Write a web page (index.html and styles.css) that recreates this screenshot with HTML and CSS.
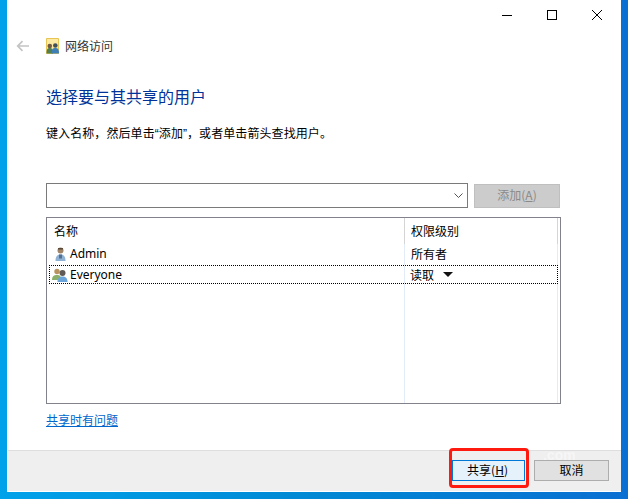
FILE: index.html
```html
<!DOCTYPE html>
<html lang="zh-CN">
<head>
<meta charset="utf-8">
<title>网络访问</title>
<link rel="stylesheet" href="styles.css">
</head>
<body>
<div class="window">
  <div class="titlebar">
    <svg class="cap" width="12" height="12" viewBox="0 0 12 12"><path d="M1 6.500h10" stroke="#000" fill="none"/></svg>
    <svg class="cap" width="12" height="12" viewBox="0 0 12 12"><rect x="1.500" y="1.500" width="9" height="9" stroke="#000" fill="none"/></svg>
    <svg class="cap" width="12" height="12" viewBox="0 0 12 12"><path d="M1 1l10 10M11 1L1 11" stroke="#000" fill="none"/></svg>
  </div>
  <div class="nav">
    <svg class="back" width="14" height="12" viewBox="0 0 14 12"><path d="M13 6H2M6.500 1.200L1.700 6l4.800 4.800" stroke="#c4c4c4" stroke-width="1.700" fill="none"/></svg>
    <svg class="navicon" width="13" height="16" viewBox="0 0 13 16">
      <path d="M0.500 0.500h12v15h-12z" fill="#fbe9a4" stroke="#e8c552"/>
      <circle cx="3.800" cy="8" r="2.300" fill="#6f5a45"/><path d="M0.500 15.500c0-4.500 1.300-5.500 3.300-5.500s3.200 1 3.200 5.500z" fill="#4f7f52"/>
      <circle cx="9.300" cy="7.500" r="2.300" fill="#3f4f5c"/><path d="M5.500 15.500c0-4.500 1.500-5.500 3.800-5.500s3.700 1 3.700 5.500z" fill="#3f7fb8"/>
    </svg>
    <span class="navtitle">网络访问</span>
  </div>
  <div class="content">
    <h1 class="heading">选择要与其共享的用户</h1>
    <p class="hint">键入名称，然后单击“添加”，或者单击箭头查找用户。</p>
    <div class="addrow">
      <div class="combo">
        <svg width="9" height="5" viewBox="0 0 9 5"><path d="M.5.500l4 4 4-4" stroke="#555" fill="none"/></svg>
      </div>
      <div class="addbtn">添加(<u>A</u>)</div>
    </div>
    <div class="list">
      <div class="row header"><span class="c1">名称</span><span class="c2">权限级别</span></div>
      <div class="row admin"><span class="c1 withicon">
        <svg width="11" height="14" viewBox="0 0 11 14"><circle cx="5.500" cy="3.500" r="3" fill="#a08468"/><path d="M3 1h5v1.500h-5z" fill="#5a4838"/><path d="M.5 14c0-5 2-6.500 5-6.500s5 1.500 5 6.500z" fill="#8fb2d4"/><path d="M4 7.500h3v4h-3z" fill="#55708c"/></svg>
        Admin</span><span class="c2">所有者</span></div>
      <div class="row focused"><span class="c1 withicon">
        <svg width="16" height="14" viewBox="0 0 16 14"><circle cx="5" cy="3.500" r="2.700" fill="#b8935f"/><path d="M0 12c0-4 2-5 5-5s4 1 4 5z" fill="#8cb06a"/><circle cx="10.500" cy="5" r="3" fill="#5f5a55"/><path d="M5.500 14c0-4 2-5.500 5-5.500s5 1.500 5 5.500z" fill="#6aa3d8"/></svg>
        Everyone</span><span class="c2 perm">读取<i class="caret"></i></span></div>
      <div class="listfill"><span class="c1"></span><span class="c2"></span></div>
    </div>
    <a class="help" href="#">共享时有问题</a>
  </div>
  <div class="footer">
    <span class="mark">.com</span>
    <div class="btn primary">共享(<u>H</u>)<span class="redbox"></span></div>
    <div class="btn">取消</div>
  </div>
</div>
</body>
</html>
```
FILE: styles.css
```css
* { box-sizing: border-box; }
html, body { margin: 0; height: 100%; }
body {
  width: 628px;
  height: 499px;
  overflow: hidden;
  padding: 0 7px 7px;
  background: linear-gradient(90deg, #00a2ea 0%, #0088d4 50%, #0a6fd2 100%);
  font-family: "Noto Sans CJK SC", "Liberation Sans", sans-serif;
  font-size: 12px;
  color: #000;
}
.window {
  width: 614px;
  height: 492px;
  background: #fff;
  display: flex;
  flex-direction: column;
  padding-bottom: 1px;
}
.titlebar {
  height: 30px;
  display: flex;
  justify-content: flex-end;
  align-items: flex-start;
  padding: 9px 18px 0 0;
  gap: 33px;
}
.cap { display: block; }
.nav {
  height: 31px;
  display: flex;
  align-items: center;
  padding-left: 9px;
}
.back { margin-right: 16px; }
.navicon { margin-right: 6px; }
.navtitle { color: #333; line-height: 16px; }
.content { flex: 1; padding: 0 0 0 39px; }
.heading {
  margin: 24px 0 0;
  font-size: 16px;
  font-weight: 400;
  line-height: 22px;
  color: #003399;
}
.hint {
  margin: 18px 0 0;
  line-height: 18px;
  letter-spacing: .08px;
  font-family: "Liberation Sans", "Noto Sans CJK SC", sans-serif;
}
.addrow { display: flex; margin-top: 40px; gap: 6px; width: 515px; }
.combo {
  width: 422px;
  height: 25px;
  border: 1px solid #7a7a7a;
  display: flex;
  align-items: center;
  justify-content: flex-end;
  padding-right: 4px;
}
.addbtn {
  width: 86px;
  height: 24px;
  margin-top: 1px;
  background: #cccccc;
  border: 1px solid #bfbfbf;
  color: #8a8a8a;
  display: flex;
  align-items: center;
  justify-content: center;
  padding-bottom: 3px;
}
.list {
  width: 515px;
  height: 187px;
  margin-top: 9px;
  border: 1px solid #82828a;
  display: flex;
  flex-direction: column;
  padding: 0 2px;
}
.row {
  display: flex;
  height: 21px;
  align-items: center;
}
.header { height: 26px; }
.header .c1, .header .c2 { padding-bottom: 2px; }
.admin .c1 { padding-bottom: 2px; }
.admin .c2 { padding-bottom: 2px; }
.c1 { width: 355px; padding-left: 5px; }
.c2 { flex: 1; padding-left: 6px; align-self: stretch; display: flex; align-items: center; border-left: 1px solid #e2ecf8; border-right: 1px solid #e2ecf8; }
.header .c2 { border-left-color: #d5d5d5; border-right-color: #d5d5d5; }
.withicon { display: flex; align-items: center; gap: 4px; padding-left: 6px; font-family: "Noto Sans", sans-serif; }
.focused { height: 19px; border: 1px dotted #000; }
.focused .c1 { width: 354px; padding-left: 2px; gap: 2px; }
.focused .c2 { border-right: 0; padding-left: 5px; }
.caret {
  width: 0;
  height: 0;
  margin-left: 9px;
  border-left: 5px solid transparent;
  border-right: 5px solid transparent;
  border-top: 5px solid #111;
}
.listfill { flex: 1; display: flex; }
.help {
  display: inline-block;
  margin-top: 7px;
  color: #0066cc;
  line-height: 18px;
}
.footer {
  height: 41px;
  background: #efefef;
  border-top: 1px solid #dedede;
  margin-left: 1px;
  display: flex;
  justify-content: flex-end;
  align-items: flex-start;
  padding: 9px 12px 0 0;
  gap: 9px;
  position: relative;
}
.mark {
  position: absolute;
  left: 535px;
  top: -3px;
  font-family: "Liberation Sans", sans-serif;
  font-weight: 700;
  font-size: 14px;
  line-height: 14px;
  color: #f6f6f6;
}
.btn {
  width: 75px;
  height: 21px;
  background: #e1e1e1;
  border: 1px solid #adadad;
  display: flex;
  align-items: center;
  justify-content: center;
  position: relative;
  padding-bottom: 2px;
}
.primary { width: 73px; background: #e5f1fb; border-color: #0078d7; padding-right: 2px; }
.redbox {
  position: absolute;
  left: -4px;
  top: -13px;
  width: 80px;
  height: 40px;
  border: 3px solid #ff1a10;
  border-radius: 4px;
  pointer-events: none;
}
```
